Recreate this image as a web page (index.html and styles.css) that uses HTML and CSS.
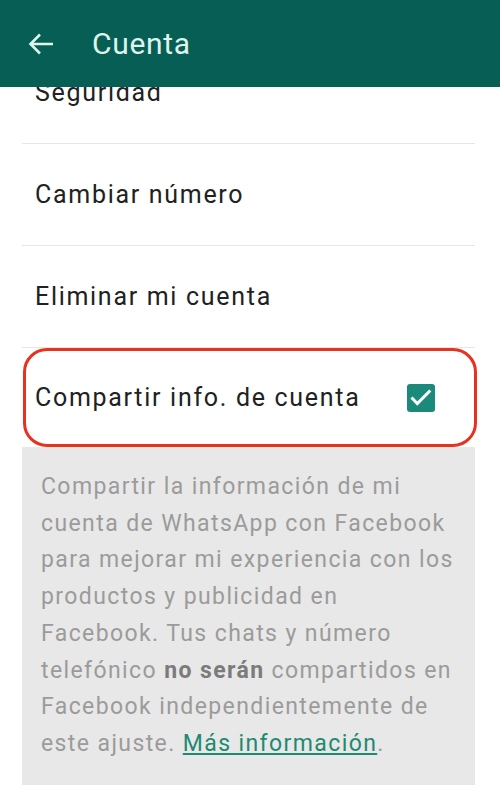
FILE: index.html
```html
<!DOCTYPE html>
<html lang="es">

<head>
    <meta charset="UTF-8">
    <meta name="viewport" content="width=device-width, initial-scale=1.0">
    <title>Cuenta</title>
    <link rel="stylesheet" href="styles.css">
</head>

<body>
    <header class="appbar">
        <svg class="back" width="26" height="22" viewBox="0 0 26 22">
            <path d="M25 11H2.5M12 1.5L2.5 11l9.5 9.5" fill="none" stroke="currentColor" stroke-width="2.6" />
        </svg>
        <h1 class="title">Cuenta</h1>
    </header>

    <div class="list">
        <div class="row">Seguridad</div>
        <div class="row">Cambiar número</div>
        <div class="row">Eliminar mi cuenta</div>
        <div class="row row-marked">
            <span>Compartir info. de cuenta</span>
            <span class="checkbox">
                <svg width="28" height="28" viewBox="0 0 28 28">
                    <path d="M4.5 13.5l5.8 6 13-13" fill="none" stroke="#fff" stroke-width="3" />
                </svg>
            </span>
        </div>
        <p class="note">
            Compartir la información de mi cuenta de WhatsApp con Facebook para mejorar mi experiencia con los
            productos y publicidad en Facebook. Tus chats y número telefónico <b>no serán</b> compartidos en
            Facebook independientemente de este ajuste. <a href="#" class="more">Más información</a>.
        </p>
    </div>
</body>

</html>
```

FILE: styles.css
```css
body {
    margin: 0;
    font-family: Roboto, "Noto Sans", sans-serif;
    background-color: #fff;
    color: #212121;
}

.appbar {
    position: relative;
    z-index: 1;
    height: 87px;
    display: flex;
    align-items: center;
    padding-left: 28px;
    background-color: #075e54;
    color: #def4ec;
}

.back {
    display: block;
}

.title {
    margin: 0 0 0 38px;
    font-size: 30px;
    font-weight: 400;
    letter-spacing: 0.7px;
}

.list {
    margin-top: -45px;
}

.row {
    height: 101px;
    margin: 0 25px 0 22px;
    padding-left: 13px;
    display: flex;
    align-items: center;
    border-bottom: 1px solid #e6e6e6;
    font-size: 25px;
    letter-spacing: 1.7px;
}

.row-marked {
    box-sizing: border-box;
    height: 99px;
    margin: 0 23px;
    padding: 0 39px 0 9px;
    justify-content: space-between;
    border: 3px solid #e8321f;
    border-radius: 24px;
}

.checkbox {
    width: 28px;
    height: 28px;
    border-radius: 3px;
    background-color: #1c8a7b;
}

.checkbox svg {
    display: block;
}

.note {
    margin: 0 25px 0 22px;
    padding: 22px 18px 22px 19px;
    background-color: #e8e8e8;
    color: #9b9b9b;
    font-size: 23px;
    line-height: 36.7px;
    letter-spacing: 1.4px;
}

.note b {
    color: #7b7b7b;
    font-weight: 700;
}

.more {
    color: #1e8a72;
}
```
